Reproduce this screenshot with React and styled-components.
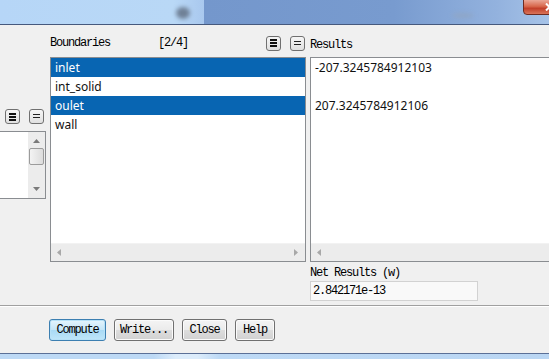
import React from "react";
import styled, { createGlobalStyle, css } from "styled-components";

const Global = createGlobalStyle`
  html, body { margin: 0; padding: 0; overflow: hidden; background: #f0f0f0; }
  #root { width: 549px; height: 359px; }
`;

const mono = css`
  font-family: "Liberation Mono", "DejaVu Sans Mono", monospace;
  font-size: 12px;
  letter-spacing: -1.2px;
  color: #000;
`;

const Screen = styled.div`
  width: 549px;
  height: 359px;
  display: flex;
  flex-direction: column;
  overflow: hidden;
  background: #f0f0f0;
`;

const TitleStrip = styled.div`
  height: 24px;
  flex: none;
  display: flex;
  border-bottom: 1px solid #46597d;
`;

const TitleLeft = styled.div`
  width: 204px;
  flex: none;
  display: flex;
  align-items: center;
  justify-content: flex-end;
  padding-right: 14px;
  box-sizing: border-box;
  background: linear-gradient(to right, #b6d6f7, #b9d8f6 85%, #a9c8ee);
`;

const TitleRight = styled.div`
  flex: 1;
  display: flex;
  align-items: flex-start;
  background: linear-gradient(to right, #7497cc 0%, #789bcf 55%, #93b2de 85%, #a6c3e8 100%);
`;

const Blur = styled.div`
  width: ${(p) => p.$w}px;
  height: ${(p) => p.$h}px;
  margin-top: ${(p) => p.$top}px;
  margin-left: ${(p) => p.$left || 0}px;
  border-radius: 50%;
  background: ${(p) => p.$color};
  filter: blur(2px);
`;

const CloseButton = styled.div`
  margin-left: auto;
  margin-right: -10px;
  width: 36px;
  height: 16px;
  margin-top: -1px;
  box-sizing: border-box;
  border: 1px solid #6e2b21;
  border-radius: 0 0 0 4px;
  background: linear-gradient(#eaa796, #d8684d 45%, #c2402a 60%, #d9745a);
  display: flex;
  align-items: center;
  padding-left: 21px;
`;

const Dialog = styled.div`
  flex: 1;
  display: flex;
  flex-direction: column;
  background: #f0f0f0;
`;

const Panels = styled.div`
  display: grid;
  grid-template-columns: 46px 256px 262px;
  column-gap: 4px;
  padding-top: 10px;
  align-items: start;
`;

const SideColumn = styled.div`
  display: flex;
  flex-direction: column;
  padding-top: 74px;
`;

const SideButtons = styled.div`
  display: flex;
  gap: 9px;
  padding-left: 5px;
  height: 15px;
`;

const Column = styled.div`
  display: flex;
  flex-direction: column;
`;

const Header = styled.div`
  height: 16px;
  display: flex;
  align-items: center;
  ${mono}
`;

const HeaderText = styled.span`
  width: ${(p) => (p.$w ? `${p.$w}px` : "auto")};
  flex: none;
  padding-top: ${(p) => p.$drop || 0}px;
`;

const IconButton = styled.div`
  width: 15px;
  height: 15px;
  box-sizing: border-box;
  border: 1px solid #707070;
  border-radius: 3px;
  background: linear-gradient(#f6f6f6, #e0e0e0);
  display: flex;
  align-items: center;
  justify-content: center;
  margin-right: ${(p) => p.$mr || 0}px;
  flex: none;
`;

const ListBox = styled.div`
  box-sizing: border-box;
  height: ${(p) => p.$h}px;
  margin-top: ${(p) => p.$mt}px;
  border: 1px solid #8a8d91;
  ${(p) => p.$noLeft && "border-left: none;"}
  background: #fff;
  display: flex;
  flex-direction: ${(p) => (p.$row ? "row" : "column")};
`;

const Rows = styled.div`
  flex: 1;
`;

const Row = styled.div`
  height: 19px;
  line-height: 20px;
  padding-left: 4px;
  font-family: "Noto Sans", "Open Sans", sans-serif;
  font-size: 12px;
  white-space: nowrap;
  color: ${(p) => (p.$selected ? "#fff" : "#111")};
  background: ${(p) => (p.$selected ? "#0865b2" : "transparent")};
`;

const HScroll = styled.div`
  height: 17px;
  flex: none;
  background: #ececec;
  border-top: 1px solid #f2f2f2;
  display: flex;
  align-items: center;
  justify-content: space-between;
  padding: 0 ${(p) => p.$pr || 6}px 0 6px;
`;

const VScroll = styled.div`
  width: 17px;
  margin-left: auto;
  background: #ececec;
  display: flex;
  flex-direction: column;
  align-items: center;
  padding: 7px 0;
  box-sizing: border-box;
`;

const Thumb = styled.div`
  width: 15px;
  height: 17px;
  margin-top: 5px;
  box-sizing: border-box;
  border: 1px solid #9b9b9b;
  border-radius: 2px;
  background: linear-gradient(to right, #f3f3f3, #dcdcdc);
`;

const Spacer = styled.div`
  flex: 1;
`;

const NetLabel = styled.div`
  ${mono}
  height: 14px;
  line-height: 14px;
  margin-top: 4px;
`;

const Field = styled.div`
  ${mono}
  width: 168px;
  height: 20px;
  margin-top: 1px;
  box-sizing: border-box;
  border: 1px solid #d2d2d2;
  background: #f9f9f9;
  line-height: 18px;
  padding-left: 2px;
`;

const Separator = styled.div`
  margin-top: 4px;
  height: 1px;
  background: #a0a0a0;
  border-bottom: 1px solid #ffffff;
`;

const ButtonRow = styled.div`
  display: flex;
  gap: 8px;
  padding-left: 49px;
  margin-top: 12px;
`;

const Button = styled.div`
  ${mono}
  width: ${(p) => p.$w}px;
  height: 22px;
  box-sizing: border-box;
  border-radius: 3px;
  display: flex;
  align-items: center;
  justify-content: center;
  border: 1px solid ${(p) => (p.$focused ? "#3c7fb1" : "#707070")};
  background: ${(p) =>
    p.$focused
      ? "linear-gradient(#e5f5fd, #c4e5f7 50%, #a9daf5 51%, #bfe6f9)"
      : "linear-gradient(#f4f4f4, #ebebeb 50%, #dddddd 51%, #d1d1d1)"};
  box-shadow: inset 0 0 0 1px ${(p) => (p.$focused ? "#b7e1f7" : "#fbfbfb")};
`;

const BottomStrip = styled.div`
  height: 5px;
  flex: none;
  border-top: 1px solid #5b7097;
  background: linear-gradient(to right, #bdd9f5 0%, #bdd9f5 28%, #dcecfb 32%, #dcecfb 36%, #bdd9f5 40%, #bad6f3 100%);
`;

const Tri = ({ dir, color = "#7a7a7a" }) => {
  const pts = {
    up: "0,4 3.5,0 7,4",
    down: "0,0 7,0 3.5,4",
    left: "4,0 4,7 0,3.5",
    right: "0,0 0,7 4,3.5",
  }[dir];
  const vertical = dir === "up" || dir === "down";
  return (
    <svg width={vertical ? 7 : 4} height={vertical ? 4 : 7} viewBox={vertical ? "0 0 7 4" : "0 0 4 7"}>
      <polygon points={pts} fill={color} />
    </svg>
  );
};

const CloseIcon = () => (
  <svg width="9" height="8" viewBox="0 0 9 8">
    <path d="M1 0.5 L8 7.5 M8 0.5 L1 7.5" stroke="#fff" strokeWidth="2" />
  </svg>
);

const BarsIcon = () => (
  <svg width="7" height="8" viewBox="0 0 7 8">
    <rect x="0" y="0" width="7" height="2" fill="#111" />
    <rect x="0" y="3" width="7" height="2" fill="#111" />
    <rect x="0" y="6" width="7" height="2" fill="#111" />
  </svg>
);

const EqIcon = () => (
  <svg width="7" height="5" viewBox="0 0 7 5">
    <rect x="0" y="0" width="7" height="1" fill="#222" />
    <rect x="0" y="3" width="7" height="1" fill="#222" />
  </svg>
);

const boundaries = [
  { name: "inlet", selected: true },
  { name: "int_solid", selected: false },
  { name: "oulet", selected: true },
  { name: "wall", selected: false },
];

const results = ["-207.3245784912103", "", "207.3245784912106"];

export default function App() {
  return (
    <>
      <Global />
      <Screen>
        <TitleStrip>
          <TitleLeft>
            <Blur $w={14} $h={12} $top={2} $color="#6f8096" />
          </TitleLeft>
          <TitleRight>
            <Blur $w={22} $h={5} $top={13} $left={248} $color="#8fa6c7" />
            <CloseButton>
              <CloseIcon />
            </CloseButton>
          </TitleRight>
        </TitleStrip>
        <Dialog>
          <Panels>
            <SideColumn>
              <SideButtons>
                <IconButton>
                  <BarsIcon />
                </IconButton>
                <IconButton>
                  <EqIcon />
                </IconButton>
              </SideButtons>
              <ListBox $h={68} $mt={7} $noLeft $row>
                <VScroll>
                  <Tri dir="up" />
                  <Thumb />
                  <Spacer />
                  <Tri dir="down" />
                </VScroll>
              </ListBox>
            </SideColumn>
            <Column>
              <Header>
                <HeaderText $w={108}>Boundaries</HeaderText>
                <HeaderText $w={108}>[2/4]</HeaderText>
                <IconButton $mr={9}>
                  <BarsIcon />
                </IconButton>
                <IconButton>
                  <EqIcon />
                </IconButton>
              </Header>
              <ListBox $h={205} $mt={6}>
                <Rows>
                  {boundaries.map((b) => (
                    <Row key={b.name} $selected={b.selected}>
                      {b.name}
                    </Row>
                  ))}
                </Rows>
                <HScroll $pr={7}>
                  <Tri dir="left" color="#a8a8a8" />
                  <Tri dir="right" color="#a8a8a8" />
                </HScroll>
              </ListBox>
            </Column>
            <Column>
              <Header>
                <HeaderText $drop={3}>Results</HeaderText>
              </Header>
              <ListBox $h={205} $mt={6}>
                <Rows>
                  {results.map((r, i) => (
                    <Row key={i}>{r || "\u00a0"}</Row>
                  ))}
                </Rows>
                <HScroll>
                  <Tri dir="left" color="#a8a8a8" />
                  <Tri dir="right" color="#a8a8a8" />
                </HScroll>
              </ListBox>
              <NetLabel>Net Results (w)</NetLabel>
              <Field>2.842171e-13</Field>
            </Column>
          </Panels>
          <Separator />
          <ButtonRow>
            <Button $w={57} $focused>Compute</Button>
            <Button $w={60}>Write...</Button>
            <Button $w={45}>Close</Button>
            <Button $w={40}>Help</Button>
          </ButtonRow>
        </Dialog>
        <BottomStrip />
      </Screen>
    </>
  );
}
